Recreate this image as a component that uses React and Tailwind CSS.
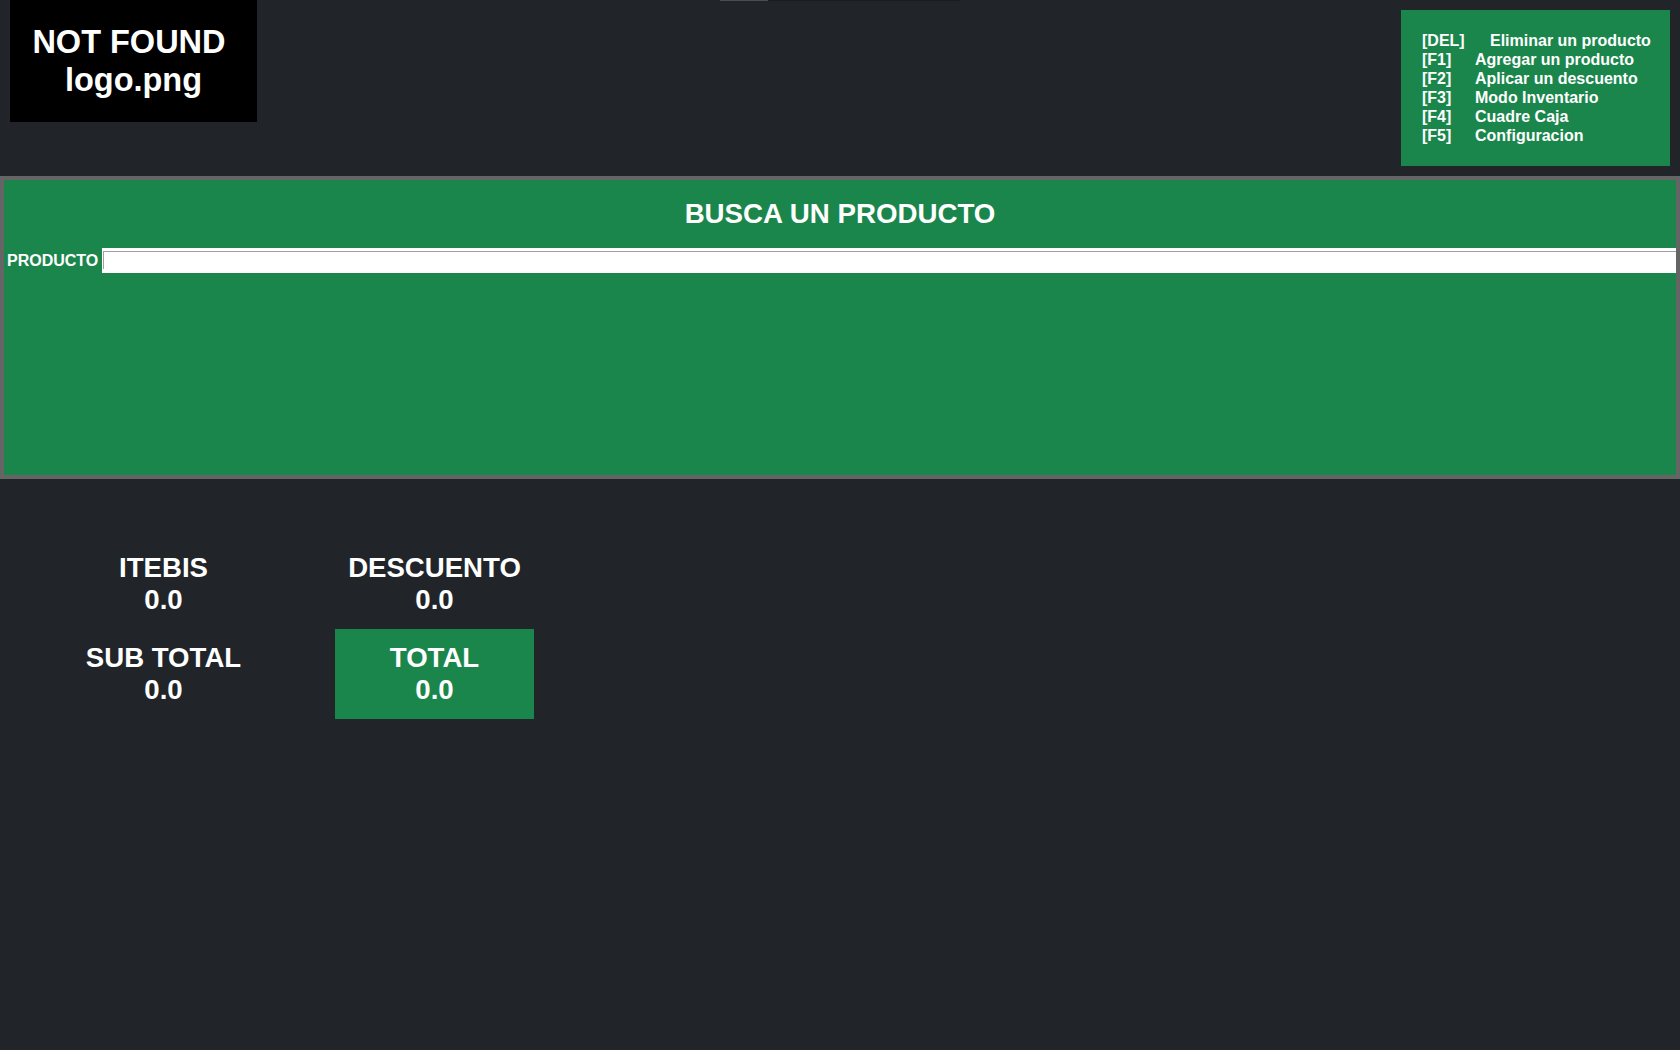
export default function App() {
  const shortcuts = [
    { key: "[DEL]", label: "Eliminar un producto", pad: "w-[68px]" },
    { key: "[F1]", label: "Agregar un producto", pad: "w-[53px]" },
    { key: "[F2]", label: "Aplicar un descuento", pad: "w-[53px]" },
    { key: "[F3]", label: "Modo Inventario", pad: "w-[53px]" },
    { key: "[F4]", label: "Cuadre Caja", pad: "w-[53px]" },
    { key: "[F5]", label: "Configuracion", pad: "w-[53px]" },
  ]

  const totals = [
    { label: "ITEBIS", value: "0.0" },
    { label: "DESCUENTO", value: "0.0" },
    { label: "SUB TOTAL", value: "0.0" },
    { label: "TOTAL", value: "0.0", highlight: true },
  ]

  return (
    <div className="min-h-[1050px] bg-[#212529] text-white font-['Liberation_Sans',Arial,sans-serif] font-bold">
      {/* header */}
      <header className="relative flex h-[176px] items-start justify-between">
        <div className="absolute left-[720px] top-0 flex h-px">
          <div className="w-[48px] bg-[#4a4d50]" />
          <div className="w-[192px] bg-[#1a1c1e]" />
        </div>

        <div className="ml-[10px] flex h-[122px] w-[247px] flex-col items-center justify-center bg-black text-[32.5px] leading-[38.5px]">
          <span>NOT FOUND{"\u00a0"}</span>
          <span>logo.png</span>
        </div>

        <div className="mr-[10px] mt-[10px] h-[156px] w-[269px] bg-[#1b864c] pl-[21px] pt-[21px] text-[16px] leading-[19px]">
          {shortcuts.map((s) => (
            <div key={s.key} className="flex">
              <span className={s.pad}>{s.key}</span>
              <span>{s.label}</span>
            </div>
          ))}
        </div>
      </header>

      {/* search */}
      <section className="h-[303px] border-4 border-[#656565] bg-[#1b864c]">
        <h2 className="pt-[16px] text-center text-[27.7px] leading-[36px]">BUSCA UN PRODUCTO</h2>
        <div className="mt-[16px] flex items-center">
          <label className="shrink-0 pl-[3px] pr-[4px] text-[16px] leading-[20px]">PRODUCTO</label>
          <div className="flex h-[25px] flex-1 bg-white pl-px pt-[3px]">
            <input
              type="text"
              className="h-[18px] w-full border-l border-t border-[#a0a0a0] bg-white text-black outline-none"
            />
          </div>
        </div>
      </section>

      {/* totals */}
      <div className="ml-[64px] mt-[60px] grid grid-cols-[199px_199px] gap-x-[72px]">
        {totals.map((t) => (
          <div
            key={t.label}
            className={
              "flex h-[90px] flex-col items-center justify-center text-[27.6px] leading-[32px] " +
              (t.highlight ? "bg-[#1b864c]" : "")
            }
          >
            <span>{t.label}</span>
            <span>{t.value}</span>
          </div>
        ))}
      </div>
    </div>
  )
}
